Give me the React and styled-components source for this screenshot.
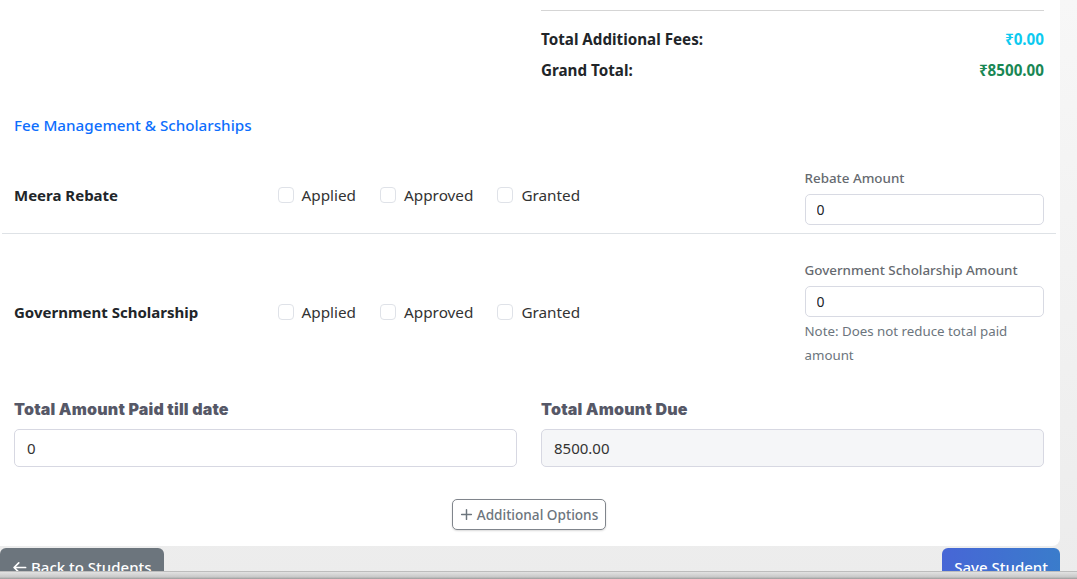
import React from "react";
import styled, { createGlobalStyle } from "styled-components";

const GlobalStyle = createGlobalStyle`
  html, body {
    margin: 0;
    padding: 0;
    background: #eeeeee;
    font-family: "Noto Sans", "Open Sans", sans-serif;
    color: #212529;
  }
  * { box-sizing: border-box; }
`;

const schemes = [
  { name: "Meera Rebate", amountLabel: "Rebate Amount" },
  {
    name: "Government Scholarship",
    amountLabel: "Government Scholarship Amount",
    note: "Note: Does not reduce total paid amount",
  },
];

function App() {
  return (
    <Page>
      <GlobalStyle />
      <Card>
        <Row>
          <Col $span={6} />
          <Col $span={6}>
            <Rule />
            <TotalLine>
              <span>Total Additional Fees:</span>
              <Amount $color="#0dcaf0">₹0.00</Amount>
            </TotalLine>
            <TotalLine>
              <span>Grand Total:</span>
              <Amount $color="#198754">₹8500.00</Amount>
            </TotalLine>
          </Col>
        </Row>

        <SectionTitle>Fee Management &amp; Scholarships</SectionTitle>

        {schemes.map((s, i) => (
          <SchemeRow key={s.name} $divider={i === 0}>
            <Col $span={3}>
              <SchemeName $shift={i === 0 ? -4 : -4}>{s.name}</SchemeName>
            </Col>
            <Col $span={6}>
              <Checks $shift={i === 0 ? -4 : -4}>
                {["Applied", "Approved", "Granted"].map((c) => (
                  <Check key={c}>
                    <Box type="checkbox" />
                    {c}
                  </Check>
                ))}
              </Checks>
            </Col>
            <Col $span={3}>
              <SmallLabel>{s.amountLabel}</SmallLabel>
              <Input defaultValue="0" />
              {s.note && <Note>{s.note}</Note>}
            </Col>
          </SchemeRow>
        ))}

        <Row>
          <Col $span={6}>
            <FieldLabel>Total Amount Paid till date</FieldLabel>
            <BigInput defaultValue="0" />
          </Col>
          <Col $span={6}>
            <FieldLabel>Total Amount Due</FieldLabel>
            <BigInput defaultValue="8500.00" readOnly $disabled />
          </Col>
        </Row>

        <Center>
          <OutlineButton>
            <Plus viewBox="0 0 16 16">
              <path d="M8 2v12M2 8h12" stroke="currentColor" strokeWidth="1.8" strokeLinecap="round" />
            </Plus>
            Additional Options
          </OutlineButton>
        </Center>
      </Card>

      <Footer>
        <FooterButton $bg="#6c757d">
          <Arrow viewBox="0 0 16 16">
            <path d="M14.5 8H2.5M7.2 3L2.2 8l5 5" fill="none" stroke="currentColor" strokeWidth="1.8" strokeLinecap="round" strokeLinejoin="round" />
          </Arrow>
          Back to Students
        </FooterButton>
        <FooterButton $bg="linear-gradient(90deg, #4766d6, #3a7ccb)">Save Student</FooterButton>
      </Footer>

      <StatusStrip />
    </Page>
  );
}

export default App;

const Page = styled.div`
  width: 1077px;
  height: 579px;
  overflow: hidden;
  position: relative;
  background: linear-gradient(180deg, #f7f7f7 0%, #ececec 100%);
`;

const Card = styled.div`
  width: 1060px;
  background: #fff;
  padding: 0 4px 16px 2px;
  border-radius: 0 0 8px 0;
`;

const Row = styled.div`
  display: flex;
`;

const Col = styled.div`
  flex: 0 0 ${(p) => (p.$span / 12) * 100}%;
  max-width: ${(p) => (p.$span / 12) * 100}%;
  padding: 0 12px;
`;

const Rule = styled.div`
  height: 1px;
  background: #d5d5d5;
  margin: 10px 0 17px;
`;

const TotalLine = styled.div`
  display: flex;
  justify-content: space-between;
  font-size: 15.2px;
  font-weight: 700;
  line-height: 22px;
  margin-bottom: 9px;
`;

const Amount = styled.span`
  color: ${(p) => p.$color};
`;

const SectionTitle = styled.div`
  color: #0d6efd;
  font-size: 15.2px;
  font-weight: 500;
  line-height: 24px;
  padding: 0 12px;
  margin: 23px 0 31px;
`;

const SchemeRow = styled.div`
  display: flex;
  align-items: center;
  padding: 0 0 8px;
  margin-bottom: ${(p) => (p.$divider ? "26px" : "23px")};
  border-bottom: ${(p) => (p.$divider ? "1px solid #dee2e6" : "none")};
`;

const SchemeName = styled.div`
  font-size: 15px;
  font-weight: 700;
  margin-top: ${(p) => p.$shift}px;
`;

const Checks = styled.div`
  display: flex;
  gap: 24px;
  margin-top: ${(p) => p.$shift}px;
`;

const Check = styled.label`
  display: flex;
  align-items: center;
  gap: 8px;
  font-size: 15.3px;
  color: #333;
`;

const Box = styled.input`
  appearance: none;
  width: 16px;
  height: 16px;
  margin: 0;
  border: 1px solid #dfe2e8;
  border-radius: 4px;
  background: #fff;
`;

const SmallLabel = styled.div`
  font-size: 13.4px;
  font-weight: 500;
  color: #666a70;
  line-height: 21px;
  margin-bottom: 5px;
`;

const Input = styled.input`
  width: 100%;
  height: 31px;
  padding: 0 11px;
  border: 1px solid #d8dae3;
  border-radius: 5px;
  font-family: inherit;
  font-size: 14px;
  color: #212529;
  outline: none;
`;

const Note = styled.div`
  font-size: 13.3px;
  color: #6c757d;
  line-height: 24px;
  margin-top: 2px;
`;

const FieldLabel = styled.div`
  font-family: Inter, "Noto Sans", sans-serif;
  font-size: 16px;
  font-weight: 900;
  letter-spacing: 0.2px;
  color: #565867;
  line-height: 22px;
  margin-bottom: 9px;
`;

const BigInput = styled.input`
  width: 100%;
  height: 38px;
  padding: 0 12px;
  border: 1px solid #d7d8e2;
  border-radius: 5px;
  background: ${(p) => (p.$disabled ? "#f5f6f8" : "#fff")};
  font-family: inherit;
  font-size: 15px;
  color: #333;
  outline: none;
`;

const Center = styled.div`
  display: flex;
  justify-content: center;
  margin-top: 32px;
`;

const OutlineButton = styled.button`
  display: flex;
  align-items: center;
  gap: 4px;
  height: 31px;
  padding: 0 7px;
  border: 1px solid #80858c;
  border-radius: 5px;
  background: #fff;
  color: #6c757d;
  font-family: inherit;
  font-size: 13.6px;
  font-weight: 500;
  box-shadow: 0 1px 2px rgba(0, 0, 0, 0.15);
`;

const Plus = styled.svg`
  width: 13px;
  height: 13px;
`;

const Footer = styled.div`
  width: 1060px;
  display: flex;
  justify-content: space-between;
  margin-top: 2px;
`;

const FooterButton = styled.button`
  display: flex;
  align-items: center;
  gap: 4px;
  height: 38px;
  padding: 0 12px;
  border: none;
  border-radius: 6px;
  background: ${(p) => p.$bg};
  color: #fff;
  font-family: inherit;
  font-size: 15px;
  font-weight: 500;
`;

const Arrow = styled.svg`
  width: 15px;
  height: 15px;
`;

const StatusStrip = styled.div`
  position: absolute;
  left: 0;
  right: 0;
  bottom: 0;
  height: 8px;
  background: linear-gradient(180deg, #e2e2e2 0%, #c9c9c9 70%, #9a9a9a 100%);
  border-top: 1px solid #bdbdbd;
`;
